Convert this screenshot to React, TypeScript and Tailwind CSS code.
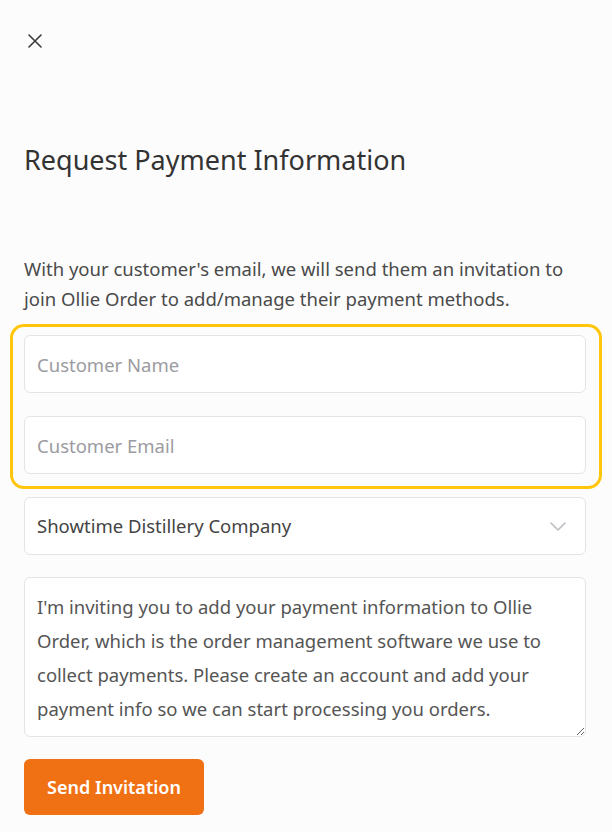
import { useState } from "react";

const MESSAGE =
  "I'm inviting you to add your payment information to Ollie Order, which is the order management software we use to collect payments. Please create an account and add your payment info so we can start processing you orders.";

function CloseIcon() {
  return (
    <svg width="14" height="14" viewBox="0 0 14 14" fill="none">
      <path d="M1 1L13 13M13 1L1 13" stroke="#3a3a3a" strokeWidth="1.6" strokeLinecap="round" />
    </svg>
  );
}

function ChevronDown() {
  return (
    <svg width="16" height="9" viewBox="0 0 16 9" fill="none">
      <path d="M1 1L8 8L15 1" stroke="#bdbdc4" strokeWidth="1.6" strokeLinecap="round" strokeLinejoin="round" />
    </svg>
  );
}

export default function App() {
  const [name, setName] = useState("");
  const [email, setEmail] = useState("");
  const [message, setMessage] = useState(MESSAGE);

  return (
    <div className="min-h-screen bg-[#fcfcfc] pb-4 pl-6 pr-[26px] pt-[34px] font-['Noto_Sans',sans-serif]">
      <button className="ml-1 flex h-[14px] w-[14px] items-center justify-center">
        <CloseIcon />
      </button>

      <h1 className="mt-[96px] text-[27px] leading-[32px] font-normal text-[#333333]">
        Request Payment Information
      </h1>

      <p className="mt-[78px] text-[18.5px] leading-[30px] text-[#4a4a4a]">
        With your customer's email, we will send them an invitation to join Ollie Order to add/manage their payment methods.
      </p>

      <div className="-ml-[14px] -mr-[16px] mt-[10px] flex flex-col gap-[23px] rounded-[14px] border-[3px] border-[#ffc60b] pb-[12px] pl-[11px] pr-[13px] pt-[8px]">
        <input
          value={name}
          onChange={(e) => setName(e.target.value)}
          placeholder="Customer Name"
          className="h-[58px] w-full rounded-md border border-[#e4e4e4] bg-white px-3 text-[18.5px] text-[#444] outline-none placeholder:text-[#9b9ba1]"
        />
        <input
          value={email}
          onChange={(e) => setEmail(e.target.value)}
          placeholder="Customer Email"
          className="h-[58px] w-full rounded-md border border-[#e4e4e4] bg-white px-3 text-[18.5px] text-[#444] outline-none placeholder:text-[#9b9ba1]"
        />
      </div>

      <div className="mt-[8px] flex h-[58px] items-center justify-between rounded-md border border-[#e4e4e4] bg-white pl-3 pr-[19px]">
        <span className="text-[18.5px] text-[#444444]">Showtime Distillery Company</span>
        <ChevronDown />
      </div>

      <textarea
        value={message}
        onChange={(e) => setMessage(e.target.value)}
        className="mt-[22px] block h-[160px] w-full rounded-md border border-[#e4e4e4] bg-white px-3 pt-3 text-[18.5px] leading-[34px] text-[#555555] outline-none"
      />

      <button className="mt-[22px] h-[56px] w-[180px] rounded-md bg-[#f07014] text-[18px] font-semibold text-white">
        Send Invitation
      </button>
    </div>
  );
}
